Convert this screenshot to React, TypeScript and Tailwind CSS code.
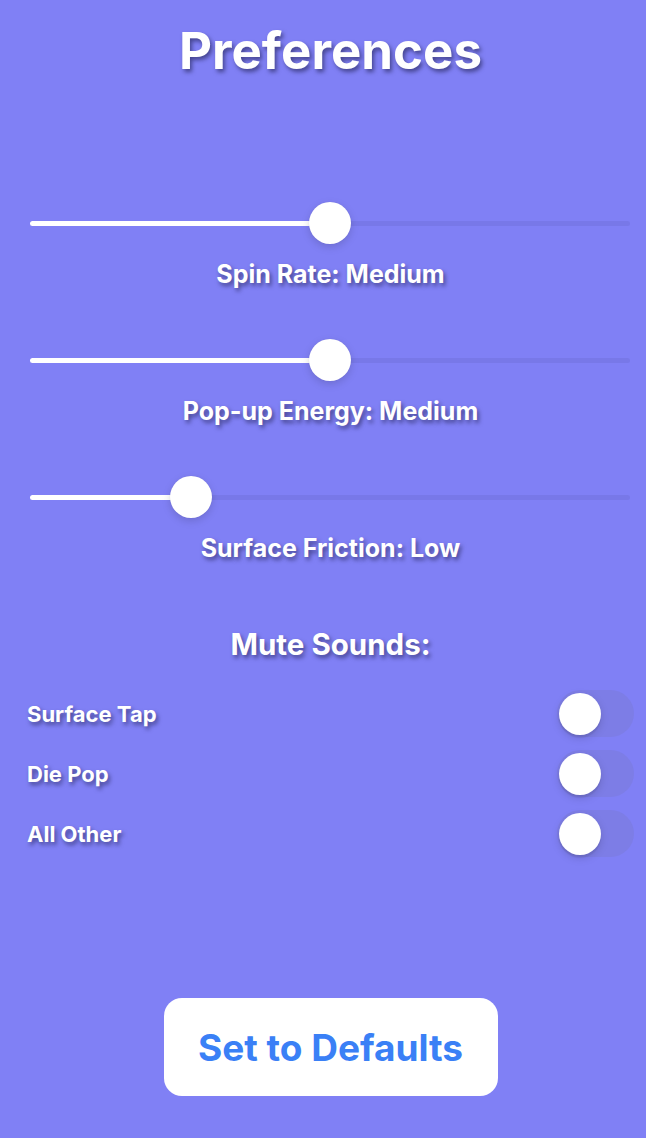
import React from "react";

const shadow = "[text-shadow:2px_3px_4px_rgba(20,20,60,0.55)]";

function Slider({ value }: { value: number }) {
  const trackLen = 600;
  const thumb = 42;
  const center = thumb / 2 + value * (trackLen - thumb);
  return (
    <div className="relative h-[42px] ml-[3px] mr-[4px] flex items-center">
      <div className="relative w-full h-[5px] rounded-full bg-[rgba(70,70,150,0.13)]">
        <div className="absolute left-0 top-0 h-full rounded-full bg-white" style={{ width: center }} />
      </div>
      <div
        className="absolute top-0 w-[42px] h-[42px] rounded-full bg-white shadow-[0_3px_8px_rgba(0,0,0,0.15),0_0_1px_rgba(0,0,0,0.1)]"
        style={{ left: center - thumb / 2 }}
      />
    </div>
  );
}

function Group({ value, label }: { value: number; label: string }) {
  return (
    <div className="flex flex-col">
      <Slider value={value} />
      <div className={`mt-[18px] h-[25px] text-[25px] leading-none font-bold text-white text-center ${shadow}`}>{label}</div>
    </div>
  );
}

function Toggle() {
  return (
    <div className="relative w-[77px] h-[47px] rounded-full bg-[rgba(110,110,150,0.15)]">
      <div className="absolute left-[2px] top-[2.5px] w-[42px] h-[42px] rounded-full bg-white shadow-[0_3px_8px_rgba(0,0,0,0.15),0_3px_1px_rgba(0,0,0,0.06)]" />
    </div>
  );
}

function Row({ label }: { label: string }) {
  return (
    <div className="h-[47px] flex items-center justify-between">
      <div className={`text-[22px] leading-none font-bold text-white ${shadow}`}>{label}</div>
      <Toggle />
    </div>
  );
}

export default function App() {
  return (
    <div
      className="min-h-[1138px] w-full bg-[#8080f5] pl-[27px] pr-[12px] pt-[26px] flex flex-col"
      style={{ fontFamily: "Inter, 'Noto Sans', sans-serif" }}
    >
      <div className={`h-[50px] text-[51px] leading-[50px] font-bold text-white text-center ${shadow}`}>Preferences</div>
      <div className="mt-[126px] flex flex-col gap-[52px]">
        <Group value={0.5} label="Spin Rate: Medium" />
        <Group value={0.5} label="Pop-up Energy: Medium" />
        <Group value={0.25} label="Surface Friction: Low" />
      </div>
      <div className={`mt-[68px] h-[30px] text-[29.5px] leading-[30px] font-bold text-white text-center ${shadow}`}>Mute Sounds:</div>
      <div className="mt-[31px] flex flex-col gap-[13px]">
        <Row label="Surface Tap" />
        <Row label="Die Pop" />
        <Row label="All Other" />
      </div>
      <div className="mt-[141px] flex justify-center">
        <button className="w-[334px] h-[98px] rounded-[18px] bg-white flex items-center justify-center text-[37px] font-bold text-[#3a80f6] leading-none">
          Set to Defaults
        </button>
      </div>
    </div>
  );
}
